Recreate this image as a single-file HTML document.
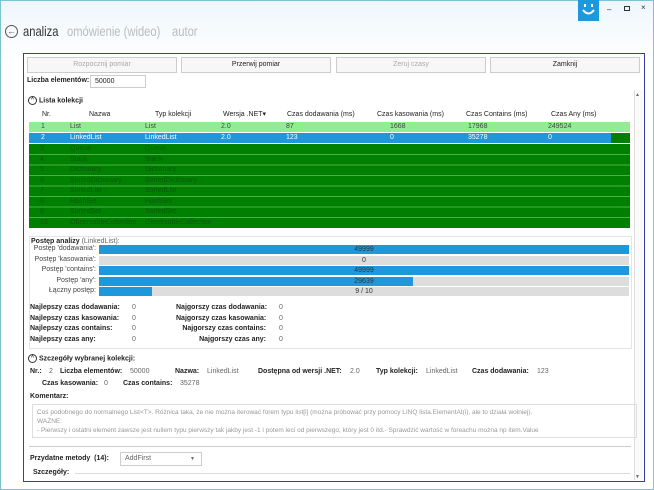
<!DOCTYPE html><html><head><meta charset="utf-8"><style>
*{box-sizing:border-box;margin:0;padding:0}
body{width:654px;height:490px;overflow:hidden;background:#fff;font-family:"Liberation Sans",sans-serif;font-size:7px;color:#222;position:relative}
.a{position:absolute;white-space:nowrap}
.win{position:absolute;left:0;top:0;width:654px;height:490px;border:1px solid #7cc4d0;background:linear-gradient(#eef6fb,#fff 60px)}
.panel{position:absolute;left:23px;top:53px;width:622px;height:429px;border:1.5px solid #3a3aa8;background:#fff}
.btn{position:absolute;top:57px;height:16px;width:150px;border:1px solid #ccc;background:#f7f7f7;text-align:center;line-height:14px;font-size:7px}
.b{font-weight:bold}
.row{position:absolute;left:29px;width:601px;height:10px;line-height:10px;font-size:7px}
.row span{position:absolute}
.bar{position:absolute;left:99px;width:530px;height:9px;background:#ddd;text-align:center;line-height:9px;font-size:7px;color:#333}
.bar i{position:absolute;left:0;top:0;height:9px;background:#1e98dc}
.bar b{position:relative;font-weight:normal}
.pl{position:absolute;right:558px;font-size:7px;color:#444}
.circ{display:inline-block;width:9px;height:9px;border:1px solid #333;border-radius:50%;vertical-align:middle;font-size:5px;line-height:7px;text-align:center;margin-right:2px}
.g{color:#666}
.t{font-size:14px;transform-origin:0 0;transform:scaleX(0.8)}
</style></head><body>
<div class="win"></div>
<div class="a" style="left:578px;top:0;width:21px;height:21px;background:#1e98dc"><svg width="21" height="21"><rect x="6" y="4" width="2" height="3" fill="#fff"/><rect x="13" y="4" width="2" height="3" fill="#fff"/><path d="M5 10 Q10.5 17 16 10" stroke="#fff" stroke-width="2" fill="none"/></svg></div>
<div class="a" style="left:607px;top:5px;font-size:8px;color:#333">–</div>
<div class="a" style="left:624px;top:6px;width:6px;height:5px;border:1px solid #333"></div>
<div class="a" style="left:641px;top:3px;font-size:8px;color:#333">×</div>
<div class="a" style="left:5px;top:25px;width:13px;height:13px;border:1px solid #555;border-radius:50%;font-size:9px;line-height:10px;text-align:center;color:#555">←</div>
<div class="a t" style="left:23px;top:23px;color:#333">analiza</div>
<div class="a t" style="left:67px;top:23px;color:#bbb">omówienie (wideo)</div>
<div class="a t" style="left:172px;top:23px;color:#bbb">autor</div>
<div class="panel"></div>
<div class="btn g" style="left:27px;color:#aaa">Rozpocznij pomiar</div>
<div class="btn" style="left:181px">Przerwij pomiar</div>
<div class="btn" style="left:336px;color:#aaa">Zeruj czasy</div>
<div class="btn" style="left:490px">Zamknij</div>
<div class="a b" style="left:27px;top:77px">Liczba elementów:</div>
<div class="a" style="left:90px;top:75px;width:56px;height:13px;border:1px solid #ccc;padding-left:4px;line-height:11px">50000</div>
<div class="a" style="left:634px;top:90px;width:9px;height:390px;border-left:1px solid #ddd;background:#fafafa"></div>
<div class="a" style="left:635px;top:92px;font-size:5px;color:#666">▲</div>
<div class="a" style="left:635px;top:474px;font-size:5px;color:#666">▼</div>
<div class="a b" style="left:28px;top:96px"><span class="circ">^</span>Lista kolekcji</div>
<div class="row" style="top:110px">
<span style="left:13px">Nr.</span><span style="left:60px">Nazwa</span><span style="left:126px">Typ kolekcji</span><span style="left:194px">Wersja .NET▾</span><span style="left:258px">Czas dodawania (ms)</span><span style="left:348px">Czas kasowania (ms)</span><span style="left:437px">Czas Contains (ms)</span><span style="left:522px">Czas Any (ms)</span></div>
<div class="row" style="top:122px;background:#90ee90;color:#444"><span style="left:12px">1</span><span style="left:41px">List</span><span style="left:116px">List</span><span style="left:192px">2.0</span><span style="left:257px">87</span><span style="left:361px">1668</span><span style="left:439px">17968</span><span style="left:519px">249524</span></div>
<div class="row" style="top:133px;background:#1e98dc;color:#fff"><span style="left:12px">2</span><span style="left:41px">LinkedList</span><span style="left:116px">LinkedList</span><span style="left:192px">2.0</span><span style="left:257px">123</span><span style="left:361px">0</span><span style="left:439px">35278</span><span style="left:519px">0</span><span style="left:582px;width:19px;height:10px;background:#008000"></span></div>
<div class="row" style="top:144px;height:84px;background:#008000;color:#0a5a0a;line-height:10.5px">
<div style="position:absolute;left:41px;top:0">Queue<br>Stack<br>Dictionary<br>SortedDictionary<br>SortedList<br>HashSet<br>SortedSet<br>ObservableCollection</div>
<div style="position:absolute;left:116px;top:0">Queue<br>Stack<br>Dictionary<br>SortedDictionary<br>SortedList<br>HashSet<br>SortedSet<br>ObservableCollection</div>
<div style="position:absolute;left:11px;top:0">3<br>4<br>5<br>6<br>7<br>8<br>9<br>10</div>
</div>
<div class="a" style="left:29px;top:154px;width:601px;height:1px;background:#4caf4c;box-shadow:0 10.5px #4caf4c,0 21px #4caf4c,0 31.5px #4caf4c,0 42px #4caf4c,0 52.5px #4caf4c,0 63px #4caf4c"></div>
<div class="a" style="left:29px;top:236px;width:603px;height:113px;border:1px solid #e4e4e4"></div>
<div class="a" style="left:31px;top:238px"><b>Postęp analizy</b> <span class="g">(LinkedList):</span></div>
<div class="pl" style="top:245px">Postęp 'dodawania':</div><div class="bar" style="top:245px"><i style="width:530px"></i><b>49999</b></div>
<div class="pl" style="top:256px">Postęp 'kasowania':</div><div class="bar" style="top:256px"><b>0</b></div>
<div class="pl" style="top:266px">Postęp 'contains':</div><div class="bar" style="top:266px"><i style="width:530px"></i><b>49999</b></div>
<div class="pl" style="top:277px">Postęp 'any':</div><div class="bar" style="top:277px"><i style="width:314px"></i><b>29639</b></div>
<div class="pl" style="top:287px">Łączny postęp:</div><div class="bar" style="top:287px"><i style="width:53px"></i><b>9 / 10</b></div>
<div class="a b" style="left:30px;top:303px;line-height:10.5px">Najlepszy czas dodawania:<br>Najlepszy czas kasowania:<br>Najlepszy czas contains:<br>Najlepszy czas any:</div>
<div class="a g" style="left:132px;top:303px;line-height:10.5px">0<br>0<br>0<br>0</div>
<div class="a b" style="left:176px;top:303px;line-height:10.5px;text-align:right;width:90px">Najgorszy czas dodawania:<br>Najgorszy czas kasowania:<br>Najgorszy czas contains:<br>Najgorszy czas any:</div>
<div class="a g" style="left:279px;top:303px;line-height:10.5px">0<br>0<br>0<br>0</div>
<div class="a b" style="left:28px;top:354px"><span class="circ">^</span>Szczegóły wybranej kolekcji:</div>
<div class="a b" style="left:30px;top:368px">Nr.:</div><div class="a g" style="left:49px;top:368px">2</div>
<div class="a b" style="left:60px;top:368px">Liczba elementów:</div><div class="a g" style="left:130px;top:368px">50000</div>
<div class="a b" style="left:175px;top:368px">Nazwa:</div><div class="a g" style="left:207px;top:368px">LinkedList</div>
<div class="a b" style="left:258px;top:368px">Dostępna od wersji .NET:</div><div class="a g" style="left:350px;top:368px">2.0</div>
<div class="a b" style="left:376px;top:368px">Typ kolekcji:</div><div class="a g" style="left:426px;top:368px">LinkedList</div>
<div class="a b" style="left:472px;top:368px">Czas dodawania:</div><div class="a g" style="left:537px;top:368px">123</div>
<div class="a b" style="left:42px;top:380px">Czas kasowania:</div><div class="a g" style="left:104px;top:380px">0</div>
<div class="a b" style="left:123px;top:380px">Czas contains:</div><div class="a g" style="left:180px;top:380px">35278</div>
<div class="a b" style="left:30px;top:393px">Komentarz:</div>
<div class="a" style="left:32px;top:404px;width:605px;height:34px;border:1px solid #ddd;color:#999;padding:3px 4px;line-height:9px;font-size:6.5px">Coś podobnego do normalnego List&lt;T&gt;. Różnica taka, że nie można iterować forem typu list[i] (można próbować przy pomocy LINQ lista.ElementAt(i), ale to działa wolniej).<br>WAŻNE:<br>- Pierwszy i ostatni element zawsze jest nullem typu pierwszy tak jakby jest -1 i potem leci od pierwszego, który jest 0 itd.- Sprawdzić wartość w foreachu można np item.Value</div>
<div class="a" style="left:29px;top:446px;width:602px;height:1px;background:#ccc"></div>
<div class="a b" style="left:30px;top:455px">Przydatne metody&nbsp; (14):</div>
<div class="a g" style="left:120px;top:452px;width:82px;height:14px;border:1px solid #ccc;padding-left:4px;line-height:12px">AddFirst<span style="position:absolute;right:6px;font-size:5px">▼</span></div>
<div class="a b" style="left:33px;top:469px">Szczegóły:</div>
<div class="a" style="left:75px;top:473px;width:555px;height:1px;background:#ddd"></div>
</body></html>
